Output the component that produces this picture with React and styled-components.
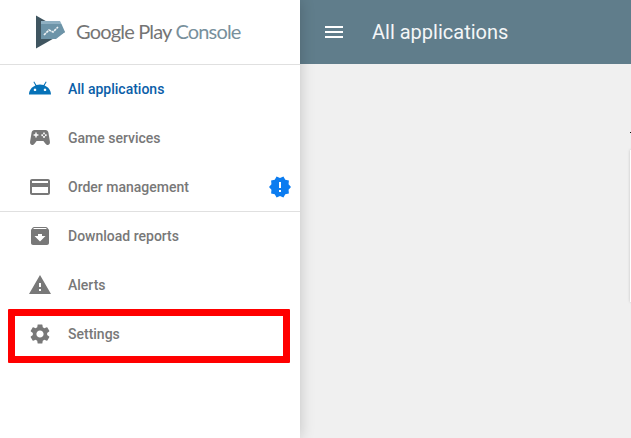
import React from "react";
import styled, { createGlobalStyle } from "styled-components";
import { MdCreditCard, MdArchive, MdWarning, MdSettings, MdMenu, MdNewReleases } from "react-icons/md";

const Global = createGlobalStyle`
  html, body { margin: 0; padding: 0; height: 100%; overflow: hidden; background: #f0f0f0; }
  #root { height: 100%; }
`;

const Page = styled.div`
  display: flex;
  width: 631px;
  height: 438px;
  position: relative;
  overflow: hidden;
  font-family: Roboto, "Liberation Sans", sans-serif;
`;

const Sidebar = styled.aside`
  width: 300px;
  flex: none;
  background: #fff;
  box-shadow: 0 0 14px rgba(0, 0, 0, 0.2);
  position: relative;
  z-index: 2;
`;

const Brand = styled.div`
  height: 64px;
  display: flex;
  align-items: center;
  padding-left: 36px;
  gap: 10px;
  box-shadow: 0 1px 0 #e0e0e0;
`;

const Wordmark = styled.span`
  font-family: Lato, sans-serif;
  font-size: 20px;
  letter-spacing: -0.82px;
  color: #757575;
  white-space: nowrap;
  transform: translateY(-1px);
`;

const WordmarkLight = styled.span`
  color: #78909c;
`;

const Group = styled.nav`
  display: flex;
  flex-direction: column;
  box-shadow: ${(p) => (p.$divided ? "0 1px 0 #e0e0e0" : "none")};
`;

const Item = styled.a`
  height: 49px;
  flex: none;
  display: flex;
  align-items: center;
  padding-left: 28px;
  font-size: 14px;
  font-weight: 500;
  color: ${(p) => (p.$active ? "#0b5ea8" : "#787878")};
  & > svg { flex: none; width: 24px; height: 24px; fill: ${(p) => (p.$active ? "#0672b8" : "currentColor")}; }
`;

const Label = styled.span`
  margin-left: 16px;
  flex: 1;
`;

const Badge = styled.span`
  display: flex;
  margin-right: 8px;
  color: #0b7cf0;
  & > svg { width: 24px; height: 24px; fill: currentColor; }
`;

const Main = styled.main`
  flex: 1;
  display: flex;
  flex-direction: column;
  min-width: 0;
`;

const TopBar = styled.header`
  height: 64px;
  flex: none;
  background: #607d8b;
  display: flex;
  align-items: center;
  padding-left: 22px;
  color: #fff;
  & > svg { width: 24px; height: 24px; fill: currentColor; }
`;

const Title = styled.h1`
  margin: 0 0 0 26px;
  font-size: 20px;
  font-weight: 400;
  color: #f4f6f7;
`;

const Content = styled.div`
  flex: 1;
  background: #f0f0f0;
  position: relative;
`;

const Tick = styled.i`
  position: absolute;
  right: 0;
  top: 68px;
  width: 1px;
  height: 1px;
  background: #111;
`;

const CardEdge = styled.i`
  position: absolute;
  right: -3px;
  top: 86px;
  width: 4px;
  height: 152px;
  background: #fff;
  box-shadow: 0 0 3px rgba(0, 0, 0, 0.2);
`;

const Highlight = styled.div`
  position: absolute;
  left: 8px;
  top: 309px;
  width: 282px;
  height: 54px;
  box-sizing: border-box;
  border: 7px solid #ff0000;
  border-radius: 1px;
  z-index: 3;
`;

const PlayLogo = () => (
  <svg width="30" height="34" viewBox="0 0 30 34">
    <path d="M0 0.5 L29 17 L0 33.5 Z" fill="#3f5560" />
    <path d="M5 6 H24 L25.5 9 H5 Z" fill="#8fb0c2" />
    <path d="M5 9 H25.5 L29 17 L20 24 H5 Z" fill="#6d94a8" />
    <path d="M8 20 L13 15 L17 17 L22 12" fill="none" stroke="#eef2f4" strokeWidth="1.6" strokeDasharray="2.6 .7" />
  </svg>
);

const AndroidIcon = () => (
  <svg viewBox="0 0 24 24">
    <path d="M1 17.5 C1 13 3.8 9.9 7.4 8.4 L5.4 5 6.2 4.5 8.4 8 C10.8 7.2 13.2 7.2 15.6 8 L17.8 4.5 18.6 5 16.6 8.4 C20.2 9.9 23 13 23 17.5 Z M7 11.5 a1.3 1.3 0 1 0 .01 0 Z M17 11.5 a1.3 1.3 0 1 0 .01 0 Z" fillRule="evenodd" />
  </svg>
);

const GamepadIcon = () => (
  <svg viewBox="0 0 24 24">
    <path fillRule="evenodd" d="M6.5 4 H17.5 C19.2 4 20 5 20.4 6.4 L21.9 15.5 C22.3 17.8 21.1 19 19.7 19 C18.6 19 18 18.4 17.3 17.5 L15.4 15 H8.6 L6.7 17.5 C6 18.4 5.4 19 4.3 19 C2.9 19 1.7 17.8 2.1 15.5 L3.6 6.4 C4 5 4.8 4 6.5 4 Z M7.3 6.6 V8.3 H5.6 V9.7 H7.3 V11.4 H8.7 V9.7 H10.4 V8.3 H8.7 V6.6 Z M16 6.5 a.9 .9 0 1 0 .01 0 Z M14.2 8.3 a.9 .9 0 1 0 .01 0 Z M17.8 8.3 a.9 .9 0 1 0 .01 0 Z M16 10.1 a.9 .9 0 1 0 .01 0 Z" />
  </svg>
);

export default function App() {
  return (
    <Page>
      <Global />
      <Sidebar>
        <Brand>
          <PlayLogo />
          <Wordmark>
            Google Play <WordmarkLight>Console</WordmarkLight>
          </Wordmark>
        </Brand>
        <Group $divided>
          <Item $active>
            <AndroidIcon />
            <Label>All applications</Label>
          </Item>
          <Item>
            <GamepadIcon />
            <Label>Game services</Label>
          </Item>
          <Item>
            <MdCreditCard />
            <Label>Order management</Label>
            <Badge>
              <MdNewReleases />
            </Badge>
          </Item>
        </Group>
        <Group>
          <Item>
            <MdArchive />
            <Label>Download reports</Label>
          </Item>
          <Item>
            <MdWarning />
            <Label>Alerts</Label>
          </Item>
          <Item>
            <MdSettings />
            <Label>Settings</Label>
          </Item>
        </Group>
      </Sidebar>
      <Main>
        <TopBar>
          <MdMenu />
          <Title>All applications</Title>
        </TopBar>
        <Content>
          <Tick />
          <CardEdge />
        </Content>
      </Main>
      <Highlight />
    </Page>
  );
}
